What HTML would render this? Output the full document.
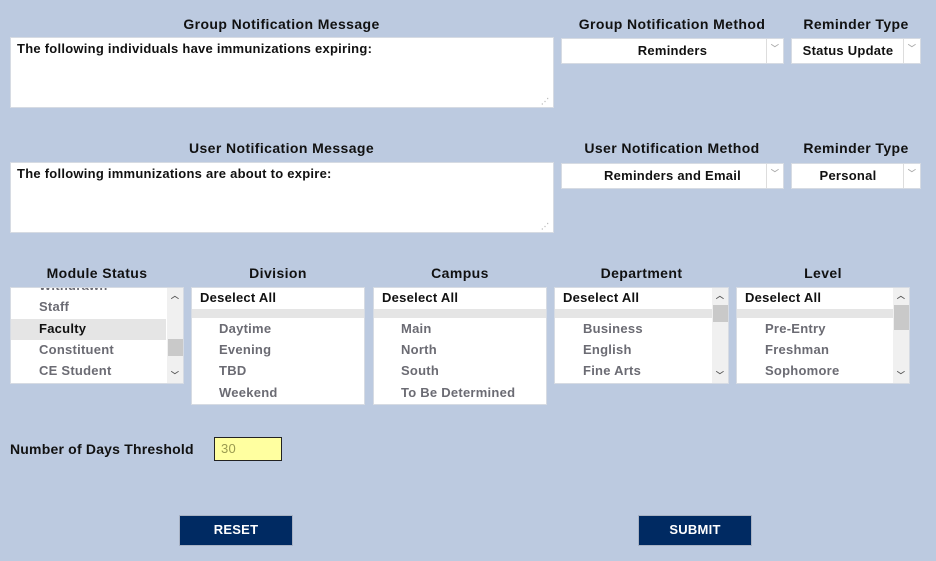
<!DOCTYPE html><html><head><style>
body{margin:0;width:936px;height:561px;background:#bccae0;font-family:"Liberation Sans",Arial,sans-serif;font-weight:bold;font-size:13px;letter-spacing:0.25px;position:relative;overflow:hidden;color:#111}
.a{position:absolute}
.h{position:absolute;text-align:center;font-size:14px;letter-spacing:0.4px}
.box{position:absolute;background:#fff;border:1px solid #d6dbe3;box-sizing:border-box;overflow:hidden}
.ta{padding:3px 6px}
.sel{position:absolute;background:#fff;border:1px solid #d6dbe3;box-sizing:border-box;text-align:center;line-height:23px}
.sel .arr{position:absolute;right:0;top:0;bottom:0;width:16px;border-left:1px solid #ddd;color:#aaa;font-size:8px;text-align:center;line-height:20px}
.it{position:absolute;color:#6b6b73;font-size:13px}
.da{position:absolute;left:8px;top:2px;color:#111}
.bar{position:absolute;left:0;right:0;top:21px;height:9px;background:#e5e5e5}
.sb{position:absolute;right:0;top:0;bottom:0;width:16px;background:#f0f0f0}
.sb .u,.sb .d{position:absolute;left:0;width:16px;text-align:center;font-size:8px;color:#555}
.thumb{position:absolute;left:1px;width:15px;background:#c9c9c9}
.btn{position:absolute;background:#002a62;color:#fff;border:1px solid #a8b2c4;text-align:center;line-height:28px;font-size:13px;box-sizing:border-box}
.grip{position:absolute;right:4px;bottom:1px;color:#bbb;font-size:8px;letter-spacing:0}
</style></head><body>
<div class="h" style="left:10px;width:543px;top:16px">Group Notification Message</div>
<div class="box ta" style="left:10px;top:37px;width:544px;height:71px">The following individuals have immunizations expiring:<span class="grip">⋰</span></div>
<div class="h" style="left:561px;width:222px;top:16px">Group Notification Method</div>
<div class="sel" style="left:561px;top:38px;width:223px;height:26px">Reminders<span class="arr">﹀</span></div>
<div class="h" style="left:791px;width:130px;top:16px">Reminder Type</div>
<div class="sel" style="left:791px;top:38px;width:130px;height:26px;padding-right:16px">Status Update<span class="arr">﹀</span></div>

<div class="h" style="left:10px;width:543px;top:140px">User Notification Message</div>
<div class="box ta" style="left:10px;top:162px;width:544px;height:71px">The following immunizations are about to expire:<span class="grip">⋰</span></div>
<div class="h" style="left:561px;width:222px;top:140px">User Notification Method</div>
<div class="sel" style="left:561px;top:163px;width:223px;height:26px">Reminders and Email<span class="arr">﹀</span></div>
<div class="h" style="left:791px;width:130px;top:140px">Reminder Type</div>
<div class="sel" style="left:791px;top:163px;width:130px;height:26px;padding-right:16px">Personal<span class="arr">﹀</span></div>

<div class="h" style="left:10px;width:174px;top:265px">Module Status</div>
<div class="box" style="left:10px;top:287px;width:174px;height:97px">
<div class="it" style="left:28px;top:-10px">Withdrawn</div>
<div class="it" style="left:28px;top:11px">Staff</div>
<div class="a" style="left:0;top:31px;width:155px;height:21px;background:#e5e5e5"></div>
<div class="it" style="left:28px;top:33px;color:#111">Faculty</div>
<div class="it" style="left:28px;top:54px">Constituent</div>
<div class="it" style="left:28px;top:75px">CE Student</div>
<div class="sb"><span class="u" style="top:2px">︿</span><div class="thumb" style="top:51px;height:17px"></div><span class="d" style="bottom:2px">﹀</span></div>
</div>

<div class="h" style="left:191px;width:174px;top:265px">Division</div>
<div class="box" style="left:191px;top:287px;width:174px;height:118px">
<div class="da">Deselect All</div><div class="bar"></div>
<div class="it" style="left:27px;top:33px">Daytime</div>
<div class="it" style="left:27px;top:54px">Evening</div>
<div class="it" style="left:27px;top:75px">TBD</div>
<div class="it" style="left:27px;top:97px">Weekend</div>
</div>

<div class="h" style="left:373px;width:174px;top:265px">Campus</div>
<div class="box" style="left:373px;top:287px;width:174px;height:118px">
<div class="da">Deselect All</div><div class="bar"></div>
<div class="it" style="left:27px;top:33px">Main</div>
<div class="it" style="left:27px;top:54px">North</div>
<div class="it" style="left:27px;top:75px">South</div>
<div class="it" style="left:27px;top:97px">To Be Determined</div>
</div>

<div class="h" style="left:554px;width:175px;top:265px">Department</div>
<div class="box" style="left:554px;top:287px;width:175px;height:97px">
<div class="da">Deselect All</div><div class="bar"></div>
<div class="it" style="left:28px;top:33px">Business</div>
<div class="it" style="left:28px;top:54px">English</div>
<div class="it" style="left:28px;top:75px">Fine Arts</div>
<div class="sb"><span class="u" style="top:2px">︿</span><div class="thumb" style="top:17px;height:17px"></div><span class="d" style="bottom:2px">﹀</span></div>
</div>

<div class="h" style="left:736px;width:174px;top:265px">Level</div>
<div class="box" style="left:736px;top:287px;width:174px;height:97px">
<div class="da">Deselect All</div><div class="bar"></div>
<div class="it" style="left:28px;top:33px">Pre-Entry</div>
<div class="it" style="left:28px;top:54px">Freshman</div>
<div class="it" style="left:28px;top:75px">Sophomore</div>
<div class="sb"><span class="u" style="top:2px">︿</span><div class="thumb" style="top:17px;height:25px"></div><span class="d" style="bottom:2px">﹀</span></div>
</div>

<div class="a" style="left:10px;top:441px;font-size:14px;letter-spacing:0.2px">Number of Days Threshold</div>
<div class="a" style="left:214px;top:437px;width:68px;height:24px;box-sizing:border-box;border:1px solid #222;background:#ffffa0;color:#9a9a50;font-weight:normal;padding:3px 6px;font-size:13px">30</div>

<div class="btn" style="left:179px;top:515px;width:114px;height:31px">RESET</div>
<div class="btn" style="left:638px;top:515px;width:114px;height:31px">SUBMIT</div>
</body></html>
